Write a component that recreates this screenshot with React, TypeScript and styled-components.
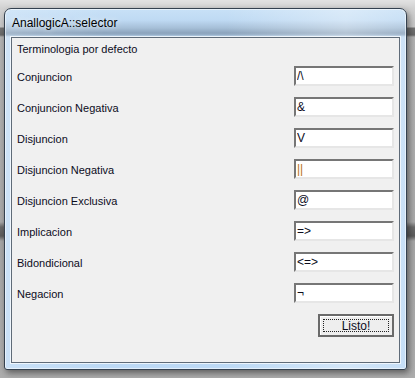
import React from 'react'
import styled, { createGlobalStyle } from 'styled-components'

const GlobalStyle = createGlobalStyle`
    html, body {
        margin: 0;
        padding: 0;
    }
    body {
        font-family: "Liberation Sans", Arial, sans-serif;
        width: 415px;
        height: 378px;
        overflow: hidden;
    }
`

const operators = [
    { label: 'Conjuncion', value: '/\\' },
    { label: 'Conjuncion Negativa', value: '&' },
    { label: 'Disjuncion', value: 'V' },
    { label: 'Disjuncion Negativa', value: '||', tint: '#b8741c' },
    { label: 'Disjuncion Exclusiva', value: '@' },
    { label: 'Implicacion', value: '=>' },
    { label: 'Bidondicional', value: '<=>' },
    { label: 'Negacion', value: '¬' },
]

const App = () => {
    return (
        <Desktop>
            <GlobalStyle />
            <Window>
                <TitleBar>AnallogicA::selector</TitleBar>
                <Client>
                    <Heading>Terminologia por defecto</Heading>
                    <OperatorList>
                        {operators.map((op) => (
                            <OperatorRow key={op.label}>
                                <Label>{op.label}</Label>
                                <SymbolInput defaultValue={op.value} $tint={op.tint} readOnly />
                            </OperatorRow>
                        ))}
                    </OperatorList>
                    <Footer>
                        <DoneButton>
                            <FocusRing>Listo!</FocusRing>
                        </DoneButton>
                    </Footer>
                </Client>
            </Window>
        </Desktop>
    )
}
export default App

const Desktop = styled.div`
    width: 415px;
    height: 378px;
    box-sizing: border-box;
    padding: 8px 9px 0 4px;
    background: linear-gradient(
        to bottom,
        #e2e2e2 0px,
        #d2d2d2 8px,
        #c6c6c6 27px,
        #727272 28px,
        #686868 35px,
        #b2b2b2 37px,
        #a9a9a9 222px,
        #6a6a6a 227px,
        #5c5c5c 236px,
        #a6a6a6 241px,
        #adadad 100%
    );
`

const Window = styled.div`
    width: 403px;
    height: 362px;
    box-sizing: border-box;
    display: flex;
    flex-direction: column;
    padding: 0 6px 6px 6px;
    border: 1px solid #34414f;
    border-radius: 7px 7px 3px 3px;
    background:
        linear-gradient(to right, rgba(255, 255, 255, 0.2) 0%, rgba(255, 255, 255, 0) 25%, rgba(255, 255, 255, 0) 55%, rgba(255, 255, 255, 0.35) 85%, rgba(255, 255, 255, 0.15) 100%),
        linear-gradient(
            to bottom,
            #c8e1f7 0px,
            #bfdaf3 11px,
            #a6bfd7 19px,
            #8ca4bd 24px,
            #98b1ca 26px,
            #b6cfe6 27px,
            #c4ddf5 28px,
            #bcd9f5 100%
        );
    box-shadow:
        inset 0 0 0 1px rgba(255, 255, 255, 0.55),
        2px 3px 6px rgba(0, 0, 0, 0.45);
`

const TitleBar = styled.div`
    height: 28px;
    display: flex;
    align-items: center;
    padding-left: 1px;
    font-size: 12px;
    color: #000;
    text-shadow: 0 0 6px rgba(255, 255, 255, 0.9);
`

const Client = styled.div`
    flex: 1;
    display: flex;
    flex-direction: column;
    padding: 4px 5px 0 5px;
    background: #f0f0f0;
    border: 1px solid #5f6b78;
    box-shadow: 0 0 0 1px rgba(255, 255, 255, 0.7);
`

const Heading = styled.div`
    height: 14px;
    line-height: 14px;
    font-size: 11px;
    color: #0c0c1c;
`

const OperatorList = styled.div`
    display: flex;
    flex-direction: column;
    gap: 11px;
    margin-top: 10px;
`

const OperatorRow = styled.div`
    display: flex;
    align-items: center;
    justify-content: space-between;
    height: 20px;
`

const Label = styled.span`
    font-size: 11px;
    color: #0c0c1c;
    padding-top: 1px;
`

const SymbolInput = styled.input<{ $tint?: string }>`
    width: 100px;
    height: 20px;
    box-sizing: border-box;
    margin: 0;
    padding: 0 0 0 1px;
    font-family: "Liberation Sans", Arial, sans-serif;
    font-size: 12px;
    color: ${(p) => p.$tint || '#0c0c1c'};
    background: #fff;
    border-style: solid;
    border-width: 2px;
    border-color: #767676 #e6e6e6 #e6e6e6 #767676;
    outline: none;
`

const Footer = styled.div`
    display: flex;
    justify-content: flex-end;
    margin-top: 11px;
`

const DoneButton = styled.button`
    width: 76px;
    height: 23px;
    box-sizing: border-box;
    margin: 0;
    padding: 3px;
    background: #eeeeee;
    border: 2px solid #6a6a6a;
    box-shadow: inset 1px 1px 0 #fff;
    font-family: "Liberation Sans", Arial, sans-serif;
    font-size: 12px;
    color: #0c0c1c;
`

const FocusRing = styled.span`
    display: flex;
    align-items: center;
    justify-content: center;
    height: 100%;
    border: 1px dotted #222;
    box-sizing: border-box;
`
